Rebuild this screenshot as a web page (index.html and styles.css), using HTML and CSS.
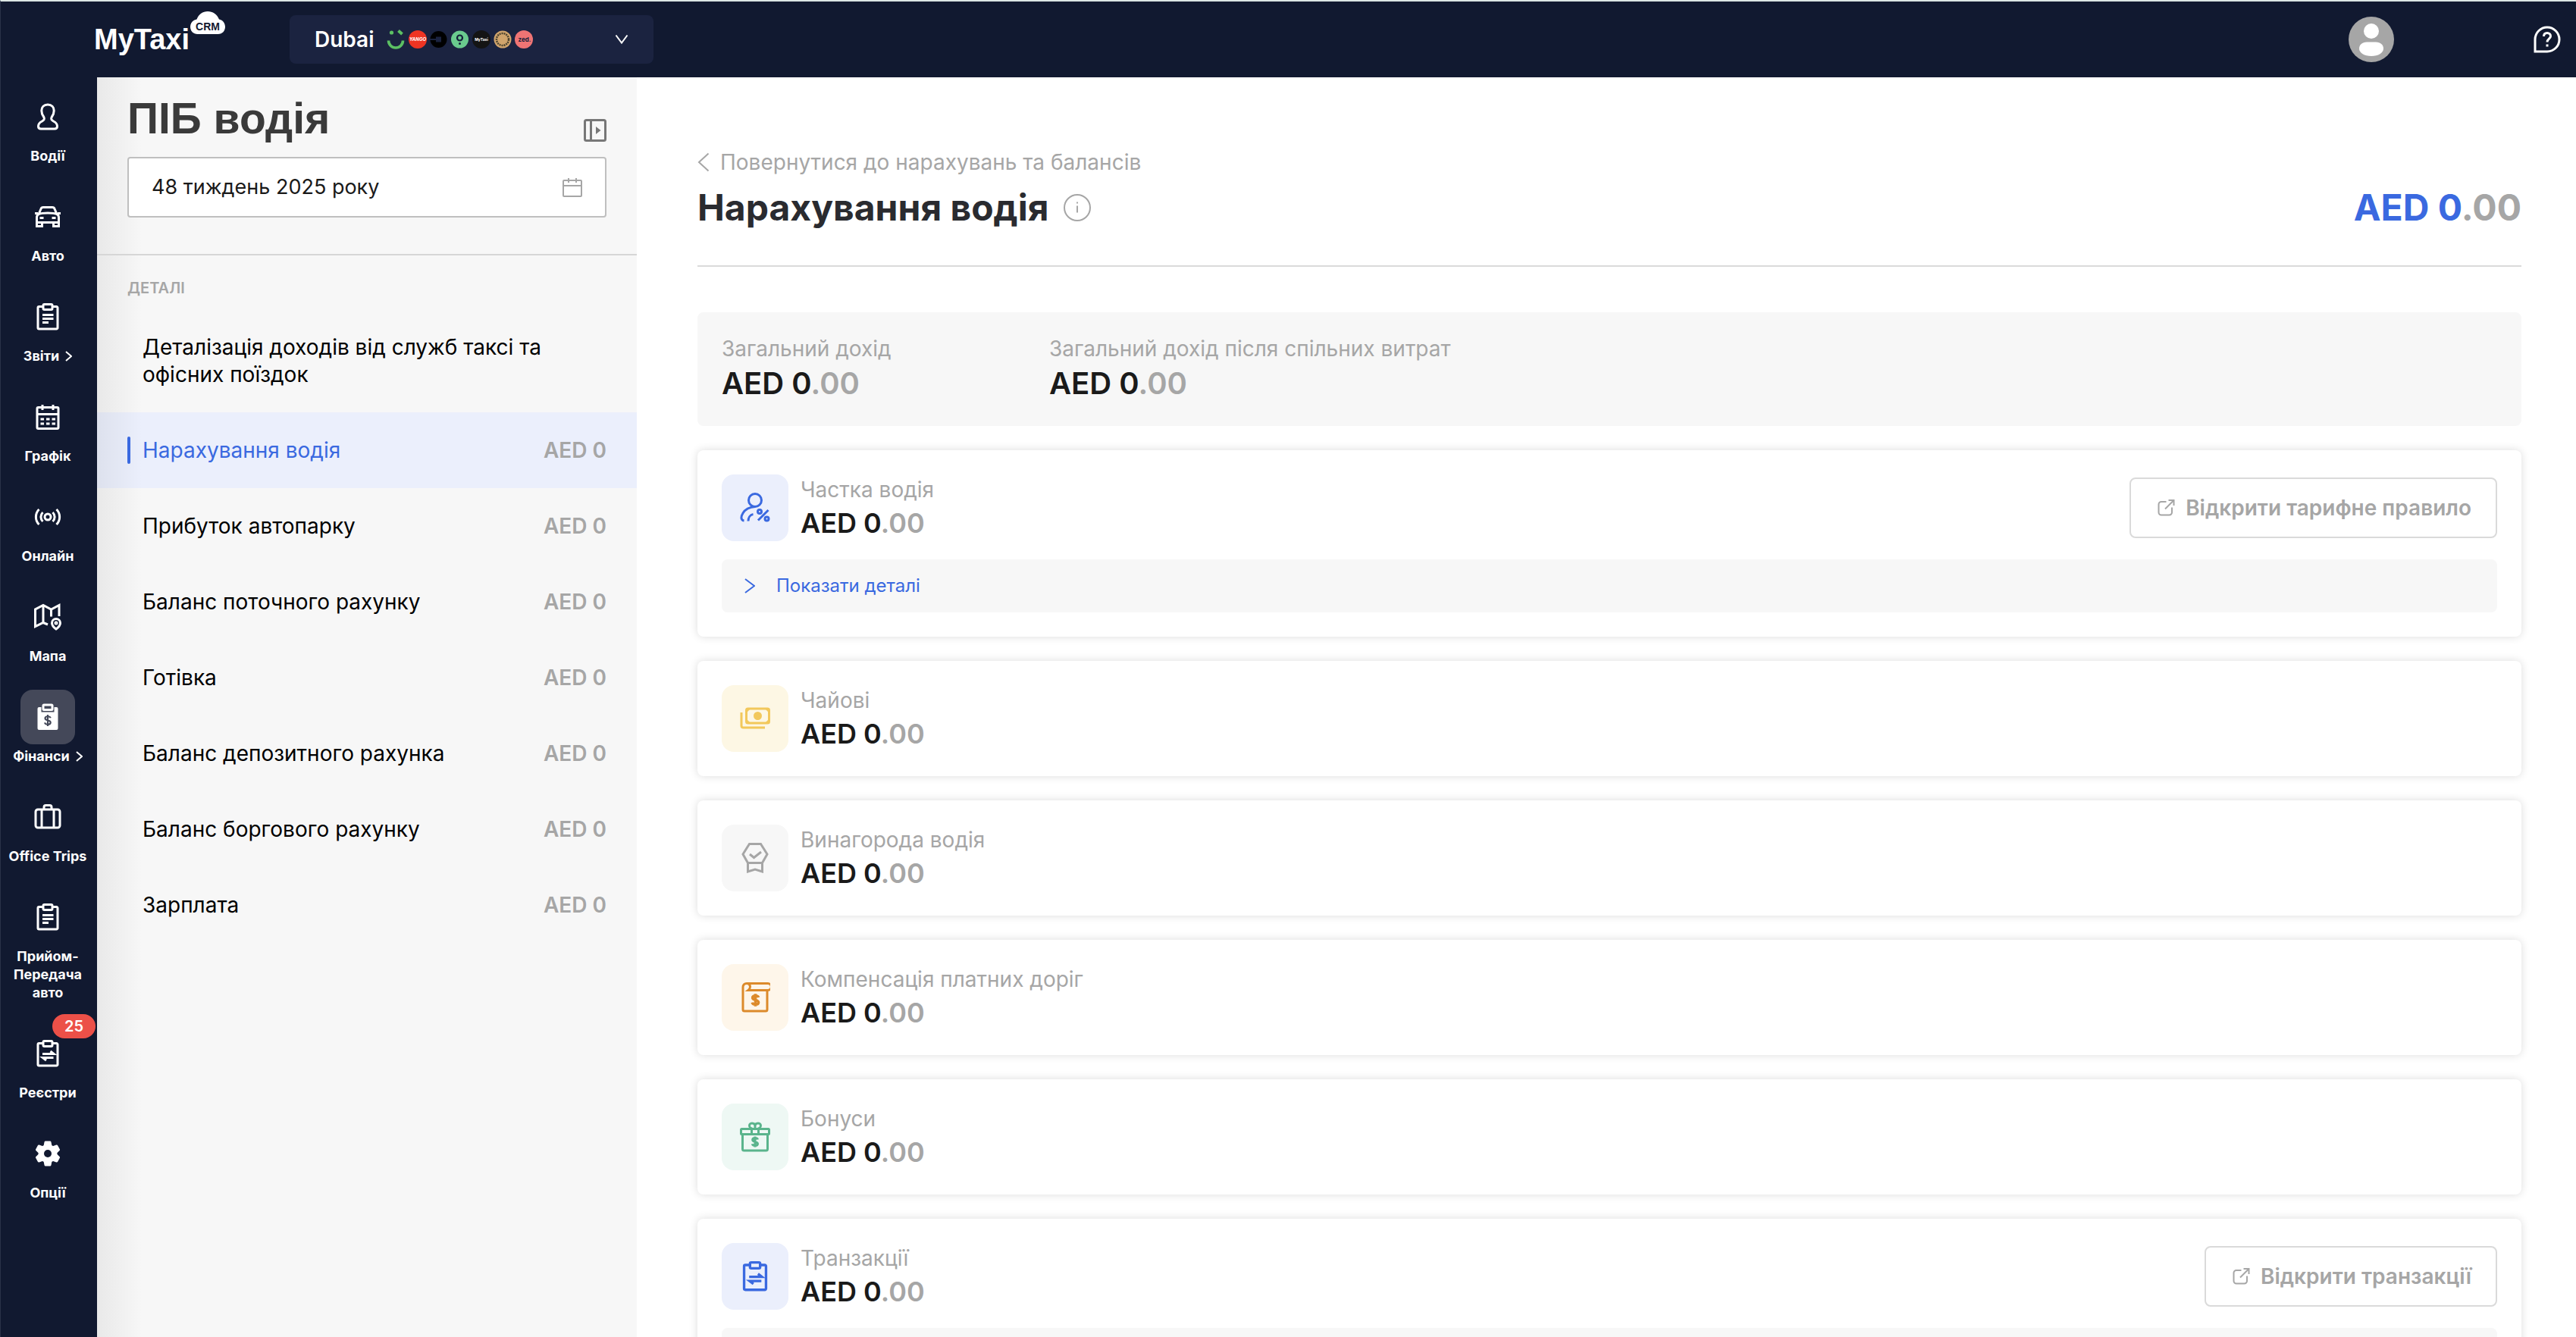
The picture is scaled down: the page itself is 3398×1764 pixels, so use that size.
FILE: index.html
```html
<!DOCTYPE html>
<html lang="uk">
<head>
<meta charset="utf-8">
<title>MyTaxi CRM</title>
<meta name="viewport" content="width=device-width, initial-scale=1">
<link rel="stylesheet" href="styles.css">
</head>
<body>
<svg class="sprite" width="0" height="0" aria-hidden="true">
  <symbol id="i-board" viewBox="0 0 36 36">
    <path d="M12 4.500H6.500a1.500 1.500 0 0 0-1.500 1.500V32.500A1.500 1.500 0 0 0 6.500 34h23a1.500 1.500 0 0 0 1.500-1.500V6a1.500 1.500 0 0 0-1.500-1.500H24"/>
    <rect x="12" y="1.500" width="12" height="7" rx="1.500"/>
  </symbol>
  <symbol id="i-swap" viewBox="0 0 36 36">
    <path d="M11 18.500H26L21.500 15M25.500 23.500H11.500L16 27"/>
  </symbol>
  <symbol id="i-list" viewBox="0 0 36 36">
    <path d="M11 15.500H25.500M11 20.500H25.500M11 25.500H19"/>
  </symbol>
  <symbol id="i-dollar" viewBox="0 0 12 16">
    <path d="M9.500 5C9.200 3.700 8 3 6 3 4 3 2.700 4 2.700 5.400 2.700 8.600 9.500 7.200 9.500 10.600 9.500 12 8.200 13 6 13 3.900 13 2.600 12.100 2.300 10.700M6 1V15"/>
  </symbol>
  <symbol id="i-open" viewBox="0 0 28 28">
    <path d="M14.500 6H8A3.500 3.500 0 0 0 4.500 9.500V20A3.500 3.500 0 0 0 8 23.500H18.500A3.500 3.500 0 0 0 22 20V13.500M13 15.500 24.500 4M17.500 4H24.500V11"/>
  </symbol>
</svg>

<div class="app">
  <header class="topbar">
    <a class="logo" href="#" aria-label="MyTaxi CRM">
      <span class="logo-name">MyTaxi</span>
      <svg class="logo-cloud" viewBox="0 0 48 32" aria-hidden="true">
        <path fill="#fff" d="M10.500 31C4.500 31 1 26.500 1 21.500 1 16.500 4.500 12.500 9.500 11.500 12 5 17.500 1 24 1S36.500 5 39 11.500C44 12.500 47 16.500 47 21.500 47 26.500 43.500 31 37.500 31Z"/>
        <text x="24" y="26" text-anchor="middle" class="cloud-text">CRM</text>
      </svg>
    </a>
    <button class="fleet" type="button">
      <span class="fleet-name">Dubai</span>
      <svg class="fleet-marks" viewBox="0 0 194 26" aria-hidden="true">
        <g fill="none" stroke="#5cc063" stroke-width="3.600"><path d="M2.500 14.500a9.500 9.500 0 0 0 19 0"/><path d="m15.500 1.500 5 4.500" stroke-width="4"/></g>
        <circle cx="6.500" cy="4" r="2.600" fill="#5cc063"/>
        <circle cx="41" cy="13" r="12" fill="#ee3423"/>
        <text x="41" y="15" text-anchor="middle" class="mark-yango">YANGO</text>
        <circle cx="68.500" cy="13" r="11" fill="#000"/>
        <rect x="65" y="9.500" width="7" height="7" fill="#1b2340"/><rect x="57" y="12" width="8" height="2" fill="#1b2340"/>
        <circle cx="96.500" cy="13" r="11.500" fill="#6acb8e"/>
        <circle cx="96.500" cy="11" r="3.500" fill="none" stroke="#14203a" stroke-width="2.200"/><circle cx="96.500" cy="18.500" r="1.500" fill="#14203a"/>
        <circle cx="125" cy="13" r="12" fill="#141414"/>
        <text x="125" y="15" text-anchor="middle" class="mark-mytaxi">MyTaxi</text>
        <circle cx="153" cy="13" r="11.500" fill="#d0a46c"/>
        <circle cx="153" cy="13" r="8" fill="none" stroke="#4c432f" stroke-width="2.500" stroke-dasharray="2 1"/><circle cx="153" cy="13" r="5" fill="#d0a46c"/>
        <circle cx="181" cy="13" r="12" fill="#ef7474"/>
        <text x="182" y="16" text-anchor="middle" class="mark-zed">zed.</text>
      </svg>
      <svg class="fleet-arrow" viewBox="0 0 18 14" aria-hidden="true"><path d="M1.500 1.500 9 11.500 16.500 1.500"/></svg>
    </button>
    <button class="avatar" type="button" aria-label="Профіль">
      <svg viewBox="0 0 60 60"><circle cx="30" cy="30" r="30" fill="#a6a6a6"/><circle cx="30" cy="19" r="10" fill="#fff"/><path fill="#fff" d="M24 33.500H36C42 33.500 46 37.500 46 42 46 48 39 52 30 52S14 48 14 42C14 37.500 18 33.500 24 33.500Z"/></svg>
    </button>
    <button class="help" type="button" aria-label="Довідка">
      <svg viewBox="0 0 36 36"><path d="M2 34V18A16 16 0 1 1 18 34Z"/><path d="M13.500 14C13.500 11 15.500 9.500 18 9.500S22.500 11.200 22.500 13.700C22.500 17.200 18 17 18 21.500M18 24.500V27.500"/></svg>
    </button>
  </header>

  <div class="body">
    <nav class="rail">
      <a class="rail-item" href="#"><span class="rail-box"><svg viewBox="0 0 36 36"><path d="M18 2C12.800 2 9.800 5.500 9.800 10 9.800 13.500 11 16 12.800 18.500 14.200 21 13 22.700 10.500 24 7.500 25.500 5.500 27.500 5.500 30.500 5.500 33 7 34 9 34H27C29 34 30.500 33 30.500 30.500 30.500 27.500 28.500 25.500 25.500 24 23 22.700 21.800 21 23.200 18.500 25 16 26.200 13.500 26.200 10 26.200 5.500 23.200 2 18 2Z"/></svg></span><span class="rail-label">Водії</span></a>
      <a class="rail-item" href="#"><span class="rail-box"><svg viewBox="0 0 36 36"><path d="M6.500 13.500 9 7.500C9.500 6 10.500 5.500 12 5.500H24C25.500 5.500 26.500 6 27 7.500L29.500 13.500M1 13.500H5M31 13.500H35M5 14.500C12 12.500 24 12.500 31 14.500M3.500 30V19C3.500 16.500 5 14.500 7.500 14M32.500 30V19C32.500 16.500 31 14.500 28.500 14M3.500 25.500H32.500M3.500 25.500V30.500H10.500V26M32.500 25.500V30.500H25.500V26M7.500 19.500H12.500M28.500 19.500H23.500"/></svg></span><span class="rail-label">Авто</span></a>
      <a class="rail-item" href="#"><span class="rail-box"><svg viewBox="0 0 36 36"><use href="#i-board"/><use href="#i-list"/></svg></span><span class="rail-label">Звіти<svg class="rail-more" viewBox="0 0 9 14"><path d="M1 1 8 7 1 13"/></svg></span></a>
      <a class="rail-item" href="#"><span class="rail-box"><svg viewBox="0 0 36 36"><rect x="4" y="5.500" width="28" height="28" rx="1.500"/><path d="M4 14.500H32M11 2V9M25 2V9"/><path d="M8.500 21H13M16 21H20.500M23.500 21H28M8.500 27H13M16 27H20.500M23.500 27H28"/></svg></span><span class="rail-label">Графік</span></a>
      <a class="rail-item" href="#"><span class="rail-box"><svg viewBox="0 0 36 36"><circle cx="18" cy="18" r="4"/><path d="M6.500 8C1 13.500 1 22.500 6.500 28M11.500 12C8 15.500 8 20.500 11.500 24M24.500 12C28 15.500 28 20.500 24.500 24M29.500 8C35 13.500 35 22.500 29.500 28"/></svg></span><span class="rail-label">Онлайн</span></a>
      <a class="rail-item" href="#"><span class="rail-box"><svg viewBox="0 0 36 36"><path d="M18 28 12 25.500 1.500 30.500V8L12 2.500 22.500 8 33 2.500V17M12 2.500V25.500M22.500 8V17.500"/><path d="M29 34C25.500 31.500 23.500 28.500 23.500 26A5.500 5.500 0 0 1 34.500 26C34.500 28.500 32.500 31.500 29 34Z"/><circle cx="29" cy="26" r="1"/></svg></span><span class="rail-label">Мапа</span></a>
      <a class="rail-item" href="#" aria-current="page"><span class="rail-box rail-box-on"><svg viewBox="0 0 36 36"><path fill="#fff" stroke="none" d="M9.500 5H6.500A2 2 0 0 0 4.500 7V33A2 2 0 0 0 6.500 35H29.500A2 2 0 0 0 31.500 33V7A2 2 0 0 0 29.500 5H26.500V11.500H9.500Z"/><rect x="12" y="2" width="12" height="6.500" rx="1"/><use href="#i-dollar" x="11.500" y="14" width="13" height="17" class="cut"/></svg></span><span class="rail-label">Фінанси<svg class="rail-more" viewBox="0 0 9 14"><path d="M1 1 8 7 1 13"/></svg></span></a>
      <a class="rail-item" href="#"><span class="rail-box"><svg viewBox="0 0 36 36"><rect x="2" y="8" width="32" height="24" rx="3"/><path d="M10 8V32M26 8V32M13 8V5A2.500 2.500 0 0 1 15.500 2.500H20.500A2.500 2.500 0 0 1 23 5V8"/></svg></span><span class="rail-label">Office Trips</span></a>
      <a class="rail-item" href="#"><span class="rail-box"><svg viewBox="0 0 36 36"><use href="#i-board"/><use href="#i-list"/></svg></span><span class="rail-label">Прийом-Передача авто</span></a>
      <a class="rail-item" href="#"><span class="rail-count">25</span><span class="rail-box"><svg viewBox="0 0 36 36"><use href="#i-board"/><use href="#i-swap"/></svg></span><span class="rail-label">Реєстри</span></a>
      <a class="rail-item" href="#"><span class="rail-box"><svg viewBox="0 0 36 36"><g fill="#fff" stroke="#fff" stroke-width="3" stroke-linejoin="round"><path fill-rule="evenodd" d="M15 3H21L22 8 25 9.700 29.800 8 32.500 13 29 16.300V19.700L32.500 23 29.800 28 25 26.300 22 28 21 33H15L14 28 11 26.300 6.200 28 3.500 23 7 19.700V16.300L3.500 13 6.200 8 11 9.700 14 8Z"/></g><circle cx="18" cy="18" r="5" fill="#111930" stroke="none"/></svg></span><span class="rail-label">Опції</span></a>
    </nav>

    <aside class="panel">
      <div class="panel-head">
        <div class="panel-title-row">
          <h2 class="panel-title">ПІБ водія</h2>
          <button class="collapse" type="button" aria-label="Згорнути панель"><svg viewBox="0 0 30 30"><rect x="1.500" y="1.500" width="27" height="27" rx="2"/><path d="M9.500 1.500V28.500"/><path class="solid" d="M16 10 22.500 15 16 20Z"/></svg></button>
        </div>
        <label class="week">
          <input class="week-input" type="text" value="48 тиждень 2025 року" aria-label="Тиждень">
          <svg class="week-icon" viewBox="0 0 26 26"><rect x="1" y="4" width="24" height="21" rx="1"/><path d="M1 11H25M8 1V7M18 1V7"/></svg>
        </label>
      </div>
      <nav class="panel-nav">
        <h3 class="panel-caption">ДЕТАЛІ</h3>
        <a class="row" href="#"><span>Деталізація доходів від служб таксі та офісних поїздок</span></a>
        <a class="row row-on" href="#"><span>Нарахування водія</span><span class="row-sum">AED 0</span></a>
        <a class="row" href="#"><span>Прибуток автопарку</span><span class="row-sum">AED 0</span></a>
        <a class="row" href="#"><span>Баланс поточного рахунку</span><span class="row-sum">AED 0</span></a>
        <a class="row" href="#"><span>Готівка</span><span class="row-sum">AED 0</span></a>
        <a class="row" href="#"><span>Баланс депозитного рахунка</span><span class="row-sum">AED 0</span></a>
        <a class="row" href="#"><span>Баланс боргового рахунку</span><span class="row-sum">AED 0</span></a>
        <a class="row" href="#"><span>Зарплата</span><span class="row-sum">AED 0</span></a>
      </nav>
    </aside>

    <main class="main">
      <a class="back" href="#"><svg viewBox="0 0 16 26"><path d="M14.500 1.500 2 13 14.500 24.500"/></svg>Повернутися до нарахувань та балансів</a>
      <div class="headline">
        <h1 class="title">Нарахування водія</h1>
        <svg class="info" viewBox="0 0 36 36" aria-hidden="true"><circle cx="18" cy="18" r="17"/><path d="M18 15.500V24.500M18 10.500V12.500"/></svg>
        <span class="total">AED 0<span class="cents">.00</span></span>
      </div>

      <section class="summary">
        <div class="summary-cell"><span class="label">Загальний дохід</span><span class="sum sum-big">AED 0<span class="cents">.00</span></span></div>
        <div class="summary-cell"><span class="label">Загальний дохід після спільних витрат</span><span class="sum sum-big">AED 0<span class="cents">.00</span></span></div>
      </section>

      <section class="card">
        <div class="card-head">
          <span class="tile tile-blue"><svg viewBox="0 0 40 40"><circle cx="20" cy="10" r="8.500"/><path d="M5.500 37C.500 36.500 1.500 31 4 27 7 22 13 19 20 18.500M11 37.500C11 33 13.500 29 17.500 28.500M24 36.500 37.500 23"/><circle cx="26" cy="25" r="2.500"/><circle cx="35.500" cy="34.500" r="2.500"/></svg></span>
          <div class="figures"><span class="label">Частка водія</span><span class="sum">AED 0<span class="cents">.00</span></span></div>
          <button class="open" type="button"><svg><use href="#i-open"/></svg>Відкрити тарифне правило</button>
        </div>
        <button class="details" type="button"><svg viewBox="0 0 14 20"><path d="M1 1 13 10 1 19"/></svg>Показати деталі</button>
      </section>

      <section class="card">
        <div class="card-head">
          <span class="tile tile-yellow"><svg viewBox="0 0 40 40"><path d="M2 12V29.500A2.500 2.500 0 0 0 4.500 32H33"/><rect x="8.500" y="7" width="30" height="19" rx="2"/><path stroke-width="1" class="solid" d="M8.500 12 13.500 7H8.500ZM33.500 7 38.500 12V7ZM8.500 21 13.500 26H8.500ZM38.500 21 33.500 26H38.500Z"/><circle class="solid" cx="23.500" cy="16.500" r="4"/></svg></span>
          <div class="figures"><span class="label">Чайові</span><span class="sum">AED 0<span class="cents">.00</span></span></div>
        </div>
      </section>

      <section class="card">
        <div class="card-head">
          <span class="tile tile-gray"><svg viewBox="0 0 40 40"><path d="M12.500 1.500H27.500L36 15 29.500 26.500H10.500L4 15ZM10.500 25V38L20 35 29.500 38V25M13 15 18.500 19.500 28 12"/></svg></span>
          <div class="figures"><span class="label">Винагорода водія</span><span class="sum">AED 0<span class="cents">.00</span></span></div>
        </div>
      </section>

      <section class="card">
        <div class="card-head">
          <span class="tile tile-orange"><svg viewBox="0 0 40 40"><path d="M9 1.500H36.500C43 1.500 43 10.500 36.500 10.500H11C15 7.500 14 1.500 9 1.500 6 1.500 4 3.500 4 6.500V36A2 2 0 0 0 6 38H34A2 2 0 0 0 36 36V11"/><use href="#i-dollar" x="13.500" y="14" width="14" height="19"/></svg></span>
          <div class="figures"><span class="label">Компенсація платних доріг</span><span class="sum">AED 0<span class="cents">.00</span></span></div>
        </div>
      </section>

      <section class="card">
        <div class="card-head">
          <span class="tile tile-green"><svg viewBox="0 0 40 40"><rect x="1.500" y="9.500" width="37" height="7" rx="1"/><path d="M3.500 16.500V36A2 2 0 0 0 5.500 38H34.500A2 2 0 0 0 36.500 36V16.500M15.500 9.500V16.500M24.500 9.500V16.500M20 9V5.500C20 .800 12.500.800 12.500 5 12.500 7.500 14.500 9 16.500 9M20 9V5.500C20 .800 27.500.800 27.500 5 27.500 7.500 25.500 9 23.500 9"/><use href="#i-dollar" x="13.500" y="18.500" width="13" height="16"/></svg></span>
          <div class="figures"><span class="label">Бонуси</span><span class="sum">AED 0<span class="cents">.00</span></span></div>
        </div>
      </section>

      <section class="card">
        <div class="card-head">
          <span class="tile tile-blue"><svg viewBox="0 0 36 36"><use href="#i-board"/><use href="#i-swap"/></svg></span>
          <div class="figures"><span class="label">Транзакції</span><span class="sum">AED 0<span class="cents">.00</span></span></div>
          <button class="open" type="button"><svg><use href="#i-open"/></svg>Відкрити транзакції</button>
        </div>
        <button class="details" type="button" aria-label="Показати деталі"><svg viewBox="0 0 14 20"><path d="M1 1 13 10 1 19"/></svg></button>
      </section>
    </main>
  </div>
</div>
</body>
</html>
```
FILE: styles.css
```css
:root {
  --navy: #111930;
  --blue: #3a69e0;
  --muted: #a6a6a6;
  --line: #dadada;
  --soft: #f7f7f7;
  --shade: linear-gradient(90deg, rgba(0, 0, 0, 0.06), transparent 60px);
}

* { box-sizing: border-box; }

body {
  margin: 0;
  font-family: Inter, "Liberation Sans", sans-serif;
  font-size: 28px;
  line-height: 36px;
  color: #1a1a1a;
  background: #fff;
}

a { color: inherit; text-decoration: none; }
button { font: inherit; color: inherit; background: none; border: 0; padding: 0; cursor: pointer; }
h1, h2, h3 { margin: 0; }
svg { display: block; flex: none; fill: none; stroke: currentColor; stroke-width: 3; }
svg text { stroke: none; }
.sprite { position: absolute; }
.solid { fill: currentColor; }

.app {
  display: flex;
  flex-direction: column;
  height: 100vh;
  border-top: 2px solid #dbe6e4;
  border-left: 1px solid #2a3248;
  overflow: hidden;
}

/* Top bar */
.topbar {
  display: flex;
  align-items: center;
  flex: none;
  height: 100px;
  padding-right: 20px;
  color: #fff;
  background: var(--navy);
}
.logo { display: flex; align-items: flex-start; align-self: stretch; width: 258px; margin-left: 123px; }
.logo-name { padding-top: 26px; font-family: "Liberation Sans", Arial, sans-serif; font-size: 38px; font-weight: 700; line-height: 48px; }
.logo-cloud { width: 48px; height: 32px; margin-top: 12px; stroke: none; }
.cloud-text { font: 700 14px "Liberation Sans", sans-serif; fill: var(--navy); }
.fleet {
  display: flex;
  align-items: center;
  width: 480px;
  height: 64px;
  padding: 0 33px;
  border-radius: 8px;
  background: #1b2340;
}
.fleet-name { font-weight: 600; }
.fleet-marks { width: 194px; height: 26px; margin-left: 16px; stroke: none; }
.mark-yango { font: italic 700 6px Inter, sans-serif; fill: #fff; }
.mark-mytaxi { font: 700 5px Inter, sans-serif; fill: #fff; }
.mark-zed { font: 700 8px Inter, sans-serif; fill: #14203a; }
.fleet-arrow { width: 18px; height: 14px; margin-left: auto; stroke-width: 2; }
.avatar { margin-left: auto; }
.avatar svg { width: 60px; height: 60px; stroke: none; }
.help { margin-left: 184px; }
.help svg { width: 36px; height: 36px; }

.body { display: flex; flex: 1; min-height: 0; }

/* Icon rail */
.rail {
  display: flex;
  flex-direction: column;
  gap: 32px;
  flex: none;
  width: 127px;
  padding: 16px 3px 0 0;
  color: #fff;
  background: var(--navy);
}
.rail-item { position: relative; display: flex; flex-direction: column; align-items: center; gap: 4px; }
.rail-box { display: grid; place-items: center; width: 72px; height: 72px; border-radius: 16px; }
.rail-box-on { color: #fff; background: #444859; }
.rail-box svg { width: 36px; height: 36px; }
.cut { color: #444859; stroke-width: 2; }
.rail-label {
  display: flex;
  align-items: center;
  justify-content: center;
  gap: 8px;
  padding: 0 8px;
  font-size: 18px;
  font-weight: 700;
  line-height: 24px;
  text-align: center;
}
.rail-more { width: 9px; height: 14px; stroke-width: 2; }
.rail-count {
  position: absolute;
  top: -16px;
  right: -1px;
  width: 57px;
  border-radius: 16px;
  background: #ec5048;
  font-size: 20px;
  font-weight: 600;
  line-height: 32px;
  text-align: center;
}

/* Driver panel */
.panel {
  flex: none;
  width: 712px;
  background: var(--shade), var(--soft);
}
.panel-head { padding: 22px 40px 48px; border-bottom: 2px solid #d6d6d6; }
.panel-title-row { display: flex; align-items: center; justify-content: space-between; }
.panel-title { font-family: "Liberation Sans", Arial, sans-serif; font-size: 57px; line-height: 64px; color: #3a3a3a; }
.collapse { padding-top: 32px; color: #777; }
.collapse svg { width: 30px; height: 30px; stroke-width: 3; }
.collapse .solid { stroke: none; }
.week {
  display: flex;
  align-items: center;
  height: 80px;
  margin-top: 19px;
  padding: 0 30px;
  border: 2px solid #bfbfbf;
  border-radius: 4px;
  background: #fff;
}
.week-input { flex: 1; min-width: 0; padding: 0; border: 0; outline: 0; font: inherit; font-size: 27px; color: #1a1a1a; background: none; }
.week-icon { width: 26px; height: 26px; color: var(--muted); stroke-width: 2; }
.panel-nav { padding-top: 31px; }
.panel-caption { padding: 0 40px; margin-bottom: 16px; font-size: 20px; font-weight: 600; line-height: 24px; color: var(--muted); }
.row {
  position: relative;
  display: flex;
  justify-content: space-between;
  gap: 48px;
  padding: 32px 40px 32px 60px;
  color: #000;
}
.row-on { color: var(--blue); background: var(--shade), #ebeffc; }
.row-on::before {
  content: "";
  position: absolute;
  top: 32px;
  left: 40px;
  width: 4px;
  height: 36px;
  border-radius: 2px;
  background: var(--blue);
}
.row-sum { flex: none; font-weight: 600; color: var(--muted); }

/* Content */
.main { flex: 1; min-width: 0; padding: 94px 72px 0 80px; overflow-y: auto; scrollbar-width: none; }
.back { display: flex; align-items: center; gap: 14px; color: var(--muted); }
.back svg { width: 16px; height: 26px; stroke-width: 2; }
.headline {
  display: flex;
  align-items: center;
  gap: 20px;
  margin: 14px 0 60px;
  padding-bottom: 48px;
  border-bottom: 2px solid var(--line);
}
.title { font-size: 48px; line-height: 56px; color: #2a2b30; }
.info { width: 36px; height: 36px; color: var(--muted); stroke-width: 2; }
.total { margin-left: auto; font-size: 48px; font-weight: 700; line-height: 56px; color: var(--blue); }
.cents { color: var(--muted); }
.label { color: var(--muted); }
.sum { font-size: 36px; font-weight: 600; line-height: 44px; }
.sum-big { font-size: 40px; line-height: 48px; }

.summary {
  display: grid;
  grid-template-columns: 432px 1fr;
  padding: 30px 32px 32px;
  border-radius: 8px;
  background: var(--soft);
}
.summary-cell, .figures { display: flex; flex-direction: column; gap: 4px; }

.card {
  margin-top: 32px;
  padding: 32px;
  border-radius: 8px;
  background: #fff;
  box-shadow: 0 0 12px rgba(0, 0, 0, 0.14);
}
.card-head { display: flex; align-items: center; gap: 16px; }
.tile { display: grid; place-items: center; width: 88px; height: 88px; border-radius: 16px; }
.tile svg { width: 40px; height: 40px; }
.tile-blue { color: var(--blue); background: #ebeffc; }
.tile-yellow { color: #f2c85b; background: #fdf7e4; }
.tile-gray { color: var(--muted); background: var(--soft); }
.tile-orange { color: #dc8a2b; background: #fef6ea; }
.tile-green { color: #5ab48c; background: #eef8f4; }
.open {
  display: flex;
  align-items: center;
  gap: 12px;
  height: 80px;
  margin-left: auto;
  padding: 0 32px;
  border: 2px solid var(--line);
  border-radius: 8px;
  font-weight: 600;
  color: var(--muted);
}
.open svg { width: 28px; height: 28px; stroke-width: 2; }
.details {
  display: flex;
  align-items: center;
  gap: 28px;
  width: 100%;
  height: 70px;
  margin-top: 24px;
  padding: 0 30px;
  border-radius: 8px;
  font-size: 24px;
  color: var(--blue);
  background: var(--soft);
}
.details svg { width: 14px; height: 20px; stroke-width: 2; }
```
